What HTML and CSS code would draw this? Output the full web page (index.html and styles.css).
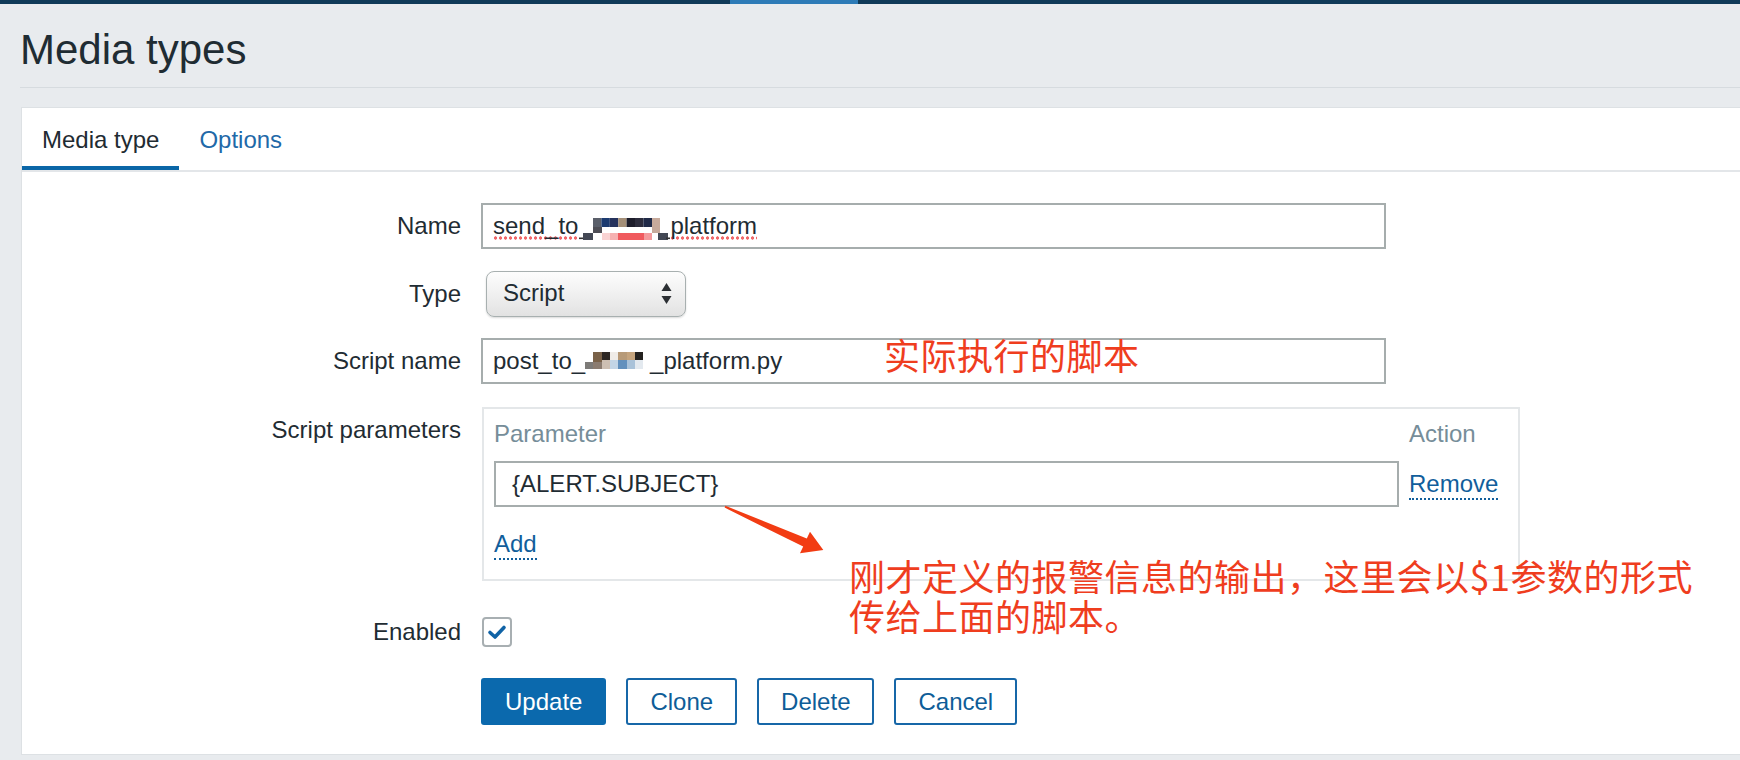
FILE: index.html
```html
<!DOCTYPE html>
<html lang="zh">
<head>
<meta charset="utf-8">
<title>Media types</title>
<link rel="stylesheet" href="styles.css">
</head>
<body>
<div class="topbar"><div class="topbar-active"></div></div>
<main class="page">
  <header class="page-header"><h1>Media types</h1></header>
  <section class="panel">
    <nav class="tabs">
      <span class="tab tab-active">Media type</span>
      <span class="tab">Options</span>
    </nav>
    <div class="form">
      <div class="row">
        <div class="label">Name</div>
        <div class="text-input"><span class="spell">send_to</span><svg class="blob blob-name" width="92" height="25" viewBox="0 0 92 25"><rect x="1" y="21.5" width="6" height="1.6" fill="#333"/><rect x="5" y="17" width="10" height="7" fill="#434854"/><rect x="15" y="11" width="9" height="6" fill="#4d4d55"/><rect x="15" y="2" width="8.4" height="9" fill="#5a5f6a"/><rect x="23.4" y="2" width="8.4" height="9" fill="#1d3b70"/><rect x="31.8" y="2" width="8.4" height="9" fill="#25325c"/><rect x="40.2" y="2" width="8.4" height="9" fill="#a48f78"/><rect x="48.6" y="2" width="8.4" height="9" fill="#1d1d2b"/><rect x="57" y="2" width="8.4" height="9" fill="#2c2c3c"/><rect x="65.4" y="2" width="8.6" height="9" fill="#202a48"/><rect x="74" y="2" width="8" height="15" fill="#c7aa9b"/><rect x="24" y="17" width="8" height="7" fill="#f9d3d3"/><rect x="32" y="17" width="8" height="7" fill="#f6b1b1"/><rect x="40" y="17" width="26" height="7" fill="#f05a5e"/><rect x="66" y="17" width="8" height="7" fill="#f39a9c"/><rect x="80" y="17" width="10" height="7" fill="#434854"/><rect x="88" y="21.5" width="4" height="1.6" fill="#333"/></svg><span class="spell">platform</span></div>
      </div>
      <div class="row row-type">
        <div class="label">Type</div>
        <div class="select"><span>Script</span><svg class="select-arrows" width="11" height="24" viewBox="0 0 11 24"><path d="M5.5 1 L10.5 9 L0.5 9 Z" fill="#2b2f33"/><path d="M0.5 14 L10.5 14 L5.5 22 Z" fill="#2b2f33"/></svg></div>
      </div>
      <div class="row row-script">
        <div class="label">Script name</div>
        <div class="text-input">post_to_<svg class="blob blob-script" width="65" height="18" viewBox="0 0 65 18"><rect x="0" y="11" width="8" height="7" fill="#7d7b78"/><rect x="8" y="1" width="9" height="10" fill="#7a6249"/><rect x="8" y="11" width="9" height="7" fill="#8b7c70"/><rect x="17" y="1" width="8" height="8" fill="#2d2724"/><rect x="17" y="9" width="8" height="9" fill="#cdbfb2"/><rect x="25" y="1" width="8" height="8" fill="#f0ece8"/><rect x="25" y="9" width="8" height="9" fill="#c3d5e6"/><rect x="33" y="1" width="9" height="8" fill="#b79a78"/><rect x="33" y="9" width="9" height="9" fill="#6290bd"/><rect x="42" y="1" width="8" height="8" fill="#c5a47e"/><rect x="42" y="9" width="8" height="9" fill="#a9c2d9"/><rect x="50" y="1" width="8" height="8" fill="#23211f"/><rect x="50" y="9" width="8" height="9" fill="#e3e9ef"/></svg>_platform.py</div>
      </div>
      <div class="row row-params">
        <div class="label">Script parameters</div>
        <div class="param-box">
          <div class="param-head">Parameter</div>
          <div class="param-head">Action</div>
          <div class="text-input param-input">{ALERT.SUBJECT}</div>
          <div class="param-action"><span class="link">Remove</span></div>
          <div class="param-add"><span class="link">Add</span></div>
        </div>
      </div>
      <div class="row row-enabled">
        <div class="label">Enabled</div>
        <div class="check-cell"><span class="checkbox"><svg width="26" height="26" viewBox="0 0 26 26"><path d="M6 13.5 L11 18 L20 8.5" fill="none" stroke="#1063a6" stroke-width="3.6" stroke-linecap="round" stroke-linejoin="round"/></svg></span></div>
      </div>
      <div class="row row-buttons">
        <div></div>
        <div class="buttons">
          <button class="btn btn-primary">Update</button>
          <button class="btn">Clone</button>
          <button class="btn">Delete</button>
          <button class="btn">Cancel</button>
        </div>
      </div>
    </div>
  </section>
</main>
<div class="note note-script">实际执行的脚本</div>
<svg class="arrow" width="110" height="60" viewBox="0 0 110 60"><polygon points="5.4,5.8 86.8,38.4 90,31.7 103.3,50 80,53.3 83.2,46.6 4.6,7.6" fill="#f23c13"/></svg>
<div class="note note-param">刚才定义的报警信息的输出，这里会以$1参数的形式<br>传给上面的脚本。</div>
</body>
</html>
```
FILE: styles.css
```css
* { box-sizing: border-box; }
html, body { margin: 0; padding: 0; }
body {
  position: relative;
  width: 1740px;
  height: 760px;
  overflow: hidden;
  background: #e8ebee;
  font-family: "Liberation Sans", Arial, sans-serif;
  color: #1f2c33;
}
.topbar { height: 4px; background: #0f3a58; }
.topbar-active { margin-left: 730px; width: 128px; height: 4px; background: #2d7bb7; }

.page { padding-left: 20px; }
.page-header { padding: 22px 0 13px; border-bottom: 1px solid #d6dbdf; }
.page-header h1 { margin: 0; font-size: 42px; line-height: 48px; font-weight: normal; color: #1f2c33; }

.panel {
  margin: 19px 0 0 1px;
  background: #fff;
  border: 1px solid #dde1e4;
  border-right: none;
  padding-bottom: 29px;
}
.tabs { display: flex; height: 64px; border-bottom: 2px solid #e3e6e9; }
.tab { padding: 20px 20px 0; font-size: 24px; line-height: 24px; color: #1f69a8; }
.tab-active { color: #1f2c33; box-shadow: inset 0 -4px 0 #0a66a7; }

.form { padding-top: 31px; }
.row { display: grid; grid-template-columns: 439px 1fr; column-gap: 20px; }
.row-type { margin-top: 22px; }
.row-script { margin-top: 21px; }
.row-params { margin-top: 23px; }
.row-enabled { margin-top: 28px; }
.row-buttons { margin-top: 23px; }

.label { text-align: right; font-size: 24px; line-height: 46px; color: #1f2c33; }

.text-input {
  width: 905px;
  height: 46px;
  border: 2px solid #a6adad;
  padding: 0 10px;
  font-size: 24px;
  line-height: 42px;
  white-space: nowrap;
  overflow: hidden;
  color: #1f2c33;
  background: #fff;
}
.spell {
  background-image: radial-gradient(circle, #f0696b 1.4px, transparent 1.9px);
  background-repeat: repeat-x;
  background-size: 5px 4px;
  background-position: 0 100%;
  padding-bottom: 1px;
}
.blob { display: inline-block; }
.blob-name { vertical-align: -7px; }
.blob-script { vertical-align: 0; }

.select {
  margin-left: 5px;
  width: 200px;
  height: 46px;
  border: 1.5px solid #a8b0b0;
  border-radius: 8px;
  background: linear-gradient(#fdfdfd, #f0f0f0 50%, #e2e2e2);
  box-shadow: 0 1px 2px rgba(0, 0, 0, 0.15);
  padding: 0 13px 3px 16px;
  display: flex;
  align-items: center;
  justify-content: space-between;
  font-size: 24px;
  line-height: 24px;
  color: #1f2c33;
}
.select-arrows { display: block; margin-top: 3px; }

.param-box {
  margin-left: 1px;
  width: 1038px;
  border: 2px solid #e4e7e9;
  padding: 13px 0 23px 10px;
  display: grid;
  grid-template-columns: 905px auto;
  column-gap: 10px;
}
.param-head { font-size: 24px; line-height: 24px; color: #768d99; }
.param-input { margin-top: 15px; padding-left: 16px; }
.param-action { margin-top: 15px; font-size: 24px; line-height: 46px; }
.param-add { justify-self: start; margin-top: 25px; font-size: 24px; line-height: 24px; }
.link { color: #115e9b; border-bottom: 2px dotted #115e9b; padding-bottom: 1px; }

.check-cell { display: flex; align-items: center; height: 46px; }
.checkbox {
  margin-left: 1px;
  width: 30px;
  height: 30px;
  border: 2px solid #a8afb2;
  border-radius: 4px;
  background: #fff;
  display: flex;
  align-items: center;
  justify-content: center;
}
.checkbox svg { display: block; }

.buttons { display: flex; gap: 20px; margin-left: 0; }
.btn {
  height: 47px;
  padding: 0 22px;
  border: 2px solid #1767a8;
  border-radius: 3px;
  background: #fff;
  color: #0e5d98;
  font-family: "Liberation Sans", Arial, sans-serif;
  font-size: 24px;
  line-height: 24px;
}
.btn-primary { background: #0b69ad; border-color: #0b69ad; color: #fff; }

.note {
  position: absolute;
  color: #ef3d1e;
  font-family: "Noto Sans CJK SC", "Noto Sans", sans-serif;
  font-size: 36px;
  line-height: 40px;
  letter-spacing: 0.5px;
  white-space: nowrap;
}
.note-script { left: 884px; top: 334px; }
.note-param { left: 849px; top: 555px; }
.arrow { position: absolute; left: 720px; top: 500px; }
```
